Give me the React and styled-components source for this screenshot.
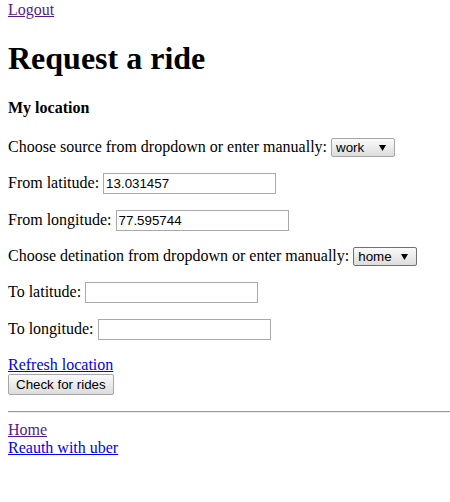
import styled, { createGlobalStyle } from "styled-components";

const GlobalStyle = createGlobalStyle`
  body {
    margin: 1px 0 0 8px;
    font-family: "Liberation Serif", "Times New Roman", serif;
    font-size: 16px;
    color: #000;
    background: #fff;
  }
`;

const Link = styled.a`
  color: ${(p) => (p.$visited ? "#551a8b" : "#0000ee")};
  text-decoration: underline;
  cursor: pointer;
`;

const Title = styled.h1`
  font-size: 32px;
  font-weight: bold;
  margin: 21.44px 0;
`;

const Subtitle = styled.h4`
  font-size: 16px;
  font-weight: bold;
  margin: 21.28px 0;
`;

const Field = styled.p`
  margin: 16px 0;
`;

const TextInput = styled.input`
  font-family: "Liberation Sans", Arial, sans-serif;
  font-size: 13.33px;
  width: 173px;
  height: 21px;
  box-sizing: border-box;
  padding: 1px 2px;
  border: 1px solid #a9a9a9;
  border-radius: 0;
  margin: 0;
  vertical-align: baseline;
`;

const Select = styled.select`
  appearance: none;
  font-family: "Liberation Sans", Arial, sans-serif;
  font-size: 13.33px;
  width: 64px;
  height: 19px;
  box-sizing: border-box;
  padding: 0 4px;
  margin: 0;
  border: 1px solid ${(p) => (p.$dark ? "#707070" : "#a6a6a6")};
  border-radius: 2px;
  color: #000;
  background:
    url("data:image/svg+xml;utf8,<svg xmlns='http://www.w3.org/2000/svg' width='7' height='6'><path d='M0 0h7L3.5 6z' fill='black'/></svg>") no-repeat right 8px center,
    linear-gradient(#fafafa, #dcdcdc);
`;

const Button = styled.button`
  font-family: "Liberation Sans", Arial, sans-serif;
  font-size: 13.33px;
  height: 21px;
  padding: 1px 7px;
  margin: 0;
  border: 1px solid #a6a6a6;
  border-radius: 2px;
  color: #000;
  background: linear-gradient(#fafafa, #dcdcdc);
`;

const Rule = styled.hr`
  margin: 16px 0 8px;
  border: none;
  border-top: 1px solid #9a9a9a;
  border-bottom: 1px solid #eee;
`;

export default function App() {
  return (
    <>
      <GlobalStyle />
      <Link $visited>Logout</Link>
      <Title>Request a ride</Title>
      <Subtitle>My location</Subtitle>
      <Field>
        Choose source from dropdown or enter manually:{" "}
        <Select defaultValue="work">
          <option value="work">work</option>
          <option value="home">home</option>
        </Select>
      </Field>
      <Field>
        From latitude: <TextInput defaultValue="13.031457" />
      </Field>
      <Field>
        From longitude: <TextInput defaultValue="77.595744" />
      </Field>
      <Field>
        Choose detination from dropdown or enter manually:{" "}
        <Select $dark defaultValue="home">
          <option value="work">work</option>
          <option value="home">home</option>
        </Select>
      </Field>
      <Field>
        To latitude: <TextInput />
      </Field>
      <Field>
        To longitude: <TextInput />
      </Field>
      <Link>Refresh location</Link>
      <div>
        <Button>Check for rides</Button>
      </div>
      <Rule />
      <Link $visited>Home</Link>
      <br />
      <Link>Reauth with uber</Link>
    </>
  );
}
